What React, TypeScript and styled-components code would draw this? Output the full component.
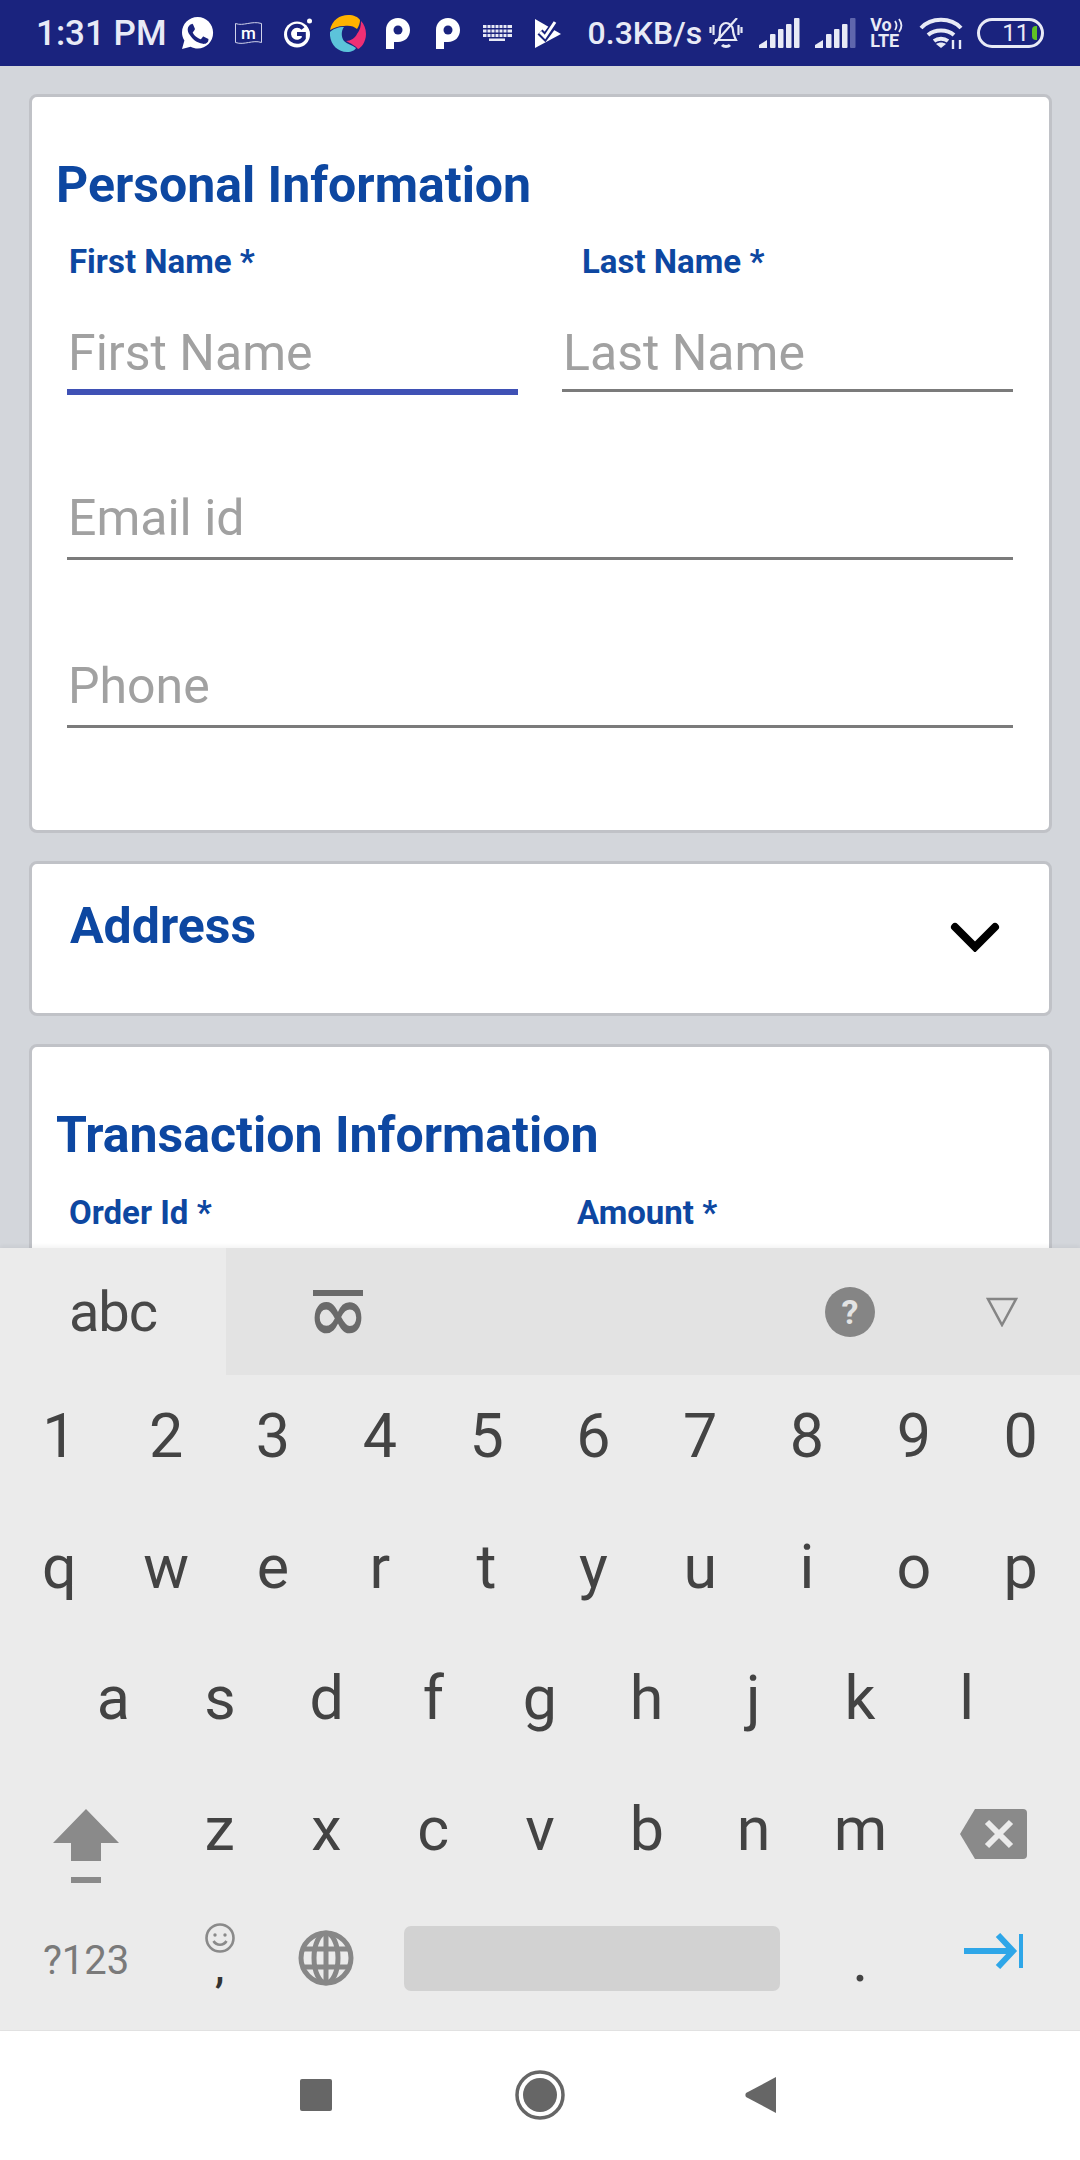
import React from "react";
import styled, { createGlobalStyle } from "styled-components";

const Global = createGlobalStyle`
  html, body { margin: 0; padding: 0; background: #fff; }
  * { box-sizing: border-box; }
`;

const Screen = styled.div`
  width: 1080px; height: 2160px; display: flex; flex-direction: column; overflow: hidden;
  font-family: Roboto, "Liberation Sans", sans-serif;
`;

const StatusBar = styled.header`
  height: 66px; flex: none; background: #1a237e; color: #e8eaf6; display: flex; align-items: center; padding-left: 36px;
`;
const Clock = styled.span`
  font-size: 35px; font-weight: 500; white-space: nowrap; line-height: 1; flex: none;
`;
const Speed = styled.span<{ $gap: number }>`
  font-size: 32px; font-weight: 500; margin-left: ${(p) => p.$gap}px; white-space: nowrap; line-height: 1; flex: none;
`;
const Slot = styled.span<{ $gap: number }>`
  display: flex; align-items: center; flex: none; margin-left: ${(p) => p.$gap}px;
  svg { display: block; }
`;
const VolteStack = styled.span`
  width: 34px; margin-left: 14px; flex: none; display: flex; flex-direction: column; gap: 0;
  font-size: 18px; font-weight: 700; line-height: 16px;
`;
const VolteLine = styled.span`
  display: flex; align-items: center; gap: 2px; height: 16px;
  svg { display: block; }
`;
const Battery = styled.span`
  width: 67px; height: 30px; margin-left: 14px; flex: none; border: 3px solid #e8eaf6; border-radius: 15px;
  display: flex; align-items: center; padding: 0 4px 0 22px; font-size: 24px; font-weight: 400; line-height: 1;
`;
const BatteryLevel = styled.i`
  width: 5px; height: 14px; background: #5fc224; border-radius: 4px 0 0 4px; margin-left: auto;
`;

const Content = styled.main`
  flex: 1; min-height: 0; overflow: hidden; background: #d3d6db; padding: 28px 28px 0 29px;
  display: flex; flex-direction: column; gap: 28px;
`;
const Card = styled.section`
  flex: none; background: #fff; border: 3px solid #c0c2c7; border-radius: 8px; color: #0d47a1;
`;
const PersonalCard = styled(Card)`
  height: 739px; padding: 60px 36px 0 0;
`;
const TransactionCard = styled(Card)`
  height: 300px; padding: 60px 36px 0 0;
`;
const Heading = styled.h2<{ $below?: number }>`
  margin: 0 0 ${(p) => p.$below ?? 29}px 24px; font-size: 50px; line-height: 56px; font-weight: 700; white-space: nowrap;
`;
const LabelRow = styled.div<{ $first: number }>`
  display: grid; grid-template-columns: ${(p) => p.$first}px 1fr; padding-left: 37px;
`;
const Label = styled.label`
  font-size: 33px; line-height: 40px; font-weight: 700; white-space: nowrap;
`;
const FieldRow = styled.div`
  display: grid; grid-template-columns: 1fr 1fr; column-gap: 44px; padding-left: 35px; align-items: start;
`;
const Field = styled.div<{ $focus?: boolean; $top: number; $pad?: number }>`
  margin-top: ${(p) => p.$top}px; padding: 0 0 ${(p) => p.$pad ?? 8}px 1px; min-width: 0;
  border-bottom: ${(p) => (p.$focus ? "6px solid #3f51b5" : "3px solid #7b7b7b")};
  color: #a1a1a1; font-size: 50px; line-height: 56px; white-space: nowrap;
`;
const StackField = styled(Field)`
  margin-left: 35px;
`;
const AddressCard = styled(Card)`
  height: 155px; display: flex; align-items: flex-start; justify-content: space-between; padding: 34px 49px 0 38px;
`;
const AddressTitle = styled.h2`
  margin: 0; font-size: 50px; line-height: 56px; font-weight: 700;
`;
const Chevron = styled.svg`
  width: 50px; height: 30px; margin-top: 24px;
`;

const Keyboard = styled.section`
  height: 782px; flex: none; background: #ebebeb; color: #434343; position: relative;
  box-shadow: 0 -2px 4px rgba(0,0,0,.05);
`;
const TabBar = styled.div`
  height: 127px; background: #e3e3e3; display: flex; align-items: center;
`;
const ActiveTab = styled.div`
  width: 226px; height: 100%; background: #ebebeb; display: flex; align-items: center; justify-content: center;
  font-size: 56px; font-weight: 400; letter-spacing: -1px; color: #484848; line-height: 1;
`;
const ScriptTab = styled.div`
  margin-left: 87px; width: 50px; height: 43px; border-top: 6px solid #6a6a6a; color: #6a6a6a;
  font-family: "DejaVu Sans", sans-serif; font-size: 60px; line-height: 37px; font-weight: 700;
  display: flex; justify-content: center;
`;
const ScriptGlyph = styled.span`
  display: block; transform: scale(1.2, 1.25);
`;
const TabIcons = styled.div`
  margin-left: auto; display: flex; align-items: center; padding-right: 62px; gap: 111px;
  svg { display: block; }
`;
const KeyRow = styled.div<{ $cols?: string; $pad?: number }>`
  height: 131px; display: grid; align-items: center; justify-items: center;
  grid-template-columns: ${(p) => p.$cols ?? "repeat(10, 1fr)"};
  padding: 0 ${(p) => p.$pad ?? 6}px;
`;
const Key = styled.span`
  font-size: 61px; font-weight: 400; line-height: 1; color: #434343; margin-top: -8px;
`;
const SymbolKey = styled.span`
  font-size: 40px; line-height: 1; color: #7a7a7a; margin-top: -8px;
`;
const IconKey = styled.span<{ $y?: number }>`
  display: flex; align-items: center; justify-content: center;
  transform: translateY(${(p) => p.$y ?? 0}px);
  svg { display: block; }
`;
const CommaKey = styled.span`
  display: flex; flex-direction: column; align-items: center; color: #333; font-size: 42px; font-weight: 500; line-height: 29px; margin-top: -25px;
  svg { display: block; }
`;
const SpaceBar = styled.span`
  justify-self: stretch; height: 65px; margin: -13px 27px 0 24px; background: #d2d2d2; border-radius: 7px;
`;
const NavBar = styled.nav`
  height: 130px; flex: none; background: #fff; display: flex; align-items: center; justify-content: center;
  border-top: 1px solid #e2e2e2; padding-bottom: 2px;
`;
const NavButton = styled.span<{ $right?: number }>`
  width: 224px; display: flex; justify-content: center; padding-right: ${(p) => p.$right ?? 0}px;
  svg { display: block; }
`;

const WhatsApp = () => (
  <svg width="33" height="34" viewBox="0 0 33 34">
    <path fill="#fff" d="M16.7 1C7.9 1 1 8 1 16.4c0 3 .9 5.8 2.4 8.2L1 33l8.6-2.3c2.2 1.2 4.6 1.8 7.1 1.8 8.6 0 15.4-7 15.4-15.8C32.1 8 25.3 1 16.7 1z"/>
    <path fill="#1a237e" d="M10.6 8.2c-.6 0-1.4.2-2 1-.7.8-1.9 2-1.9 4.5s1.8 4.9 2.1 5.2c.3.4 3.6 5.6 8.8 7.6 4.3 1.7 5.2 1.4 6.1 1.3.9-.1 3-1.2 3.4-2.4.4-1.2.4-2.2.3-2.4-.1-.2-.5-.3-1-.6l-3.5-1.7c-.5-.2-.8-.3-1.2.2l-1.6 2c-.3.4-.6.4-1.1.2-.5-.3-2.2-.8-4.2-2.6-1.6-1.4-2.6-3.1-2.9-3.6-.3-.5 0-.8.2-1l1.1-1.3c.3-.4.4-.6.6-1 .2-.4.1-.7 0-1l-1.6-3.8c-.4-1-.9-.9-1.2-1z"/>
  </svg>
);
const Flag = () => (
  <svg width="27" height="24" viewBox="0 0 27 24">
    <path fill="none" stroke="#cfd2ea" strokeWidth="1" d="M.5 2.5c8 3 16-3 26 0v19c-9-3-17 3-26 0z"/>
    <text x="13.5" y="17.5" textAnchor="middle" fill="#fff" fontSize="17" fontWeight="500" fontFamily="Roboto, sans-serif">m</text>
  </svg>
);
const GIcon = () => (
  <svg width="29" height="30" viewBox="0 0 29 30">
    <circle cx="13" cy="16.5" r="13" fill="#fff"/>
    <path fill="none" stroke="#1a237e" strokeWidth="4" d="M19 10.5a8 8 0 1 0 .8 9.6V16H13"/>
    <circle cx="25.5" cy="3" r="2.5" fill="#fff"/>
  </svg>
);
const Pie = () => (
  <svg width="36" height="37" viewBox="0 0 36 37">
    <path fill="#ffb300" d="M0 15C2 5 10 0 18 0c6 0 10 2 12 5 0 3-1 6-3 9-3-3-8-4-13-3-6 0-10 2-14 4z"/>
    <path fill="#5cc3da" d="M0 17c3-3 8-5 14-5-3 4-3 10 0 14 3 3 8 4 12 7-1 2-4 4-9 4C7 37-1 28 0 17z"/>
    <path fill="#ef2f74" d="M31 6c3 3 5 8 5 13 0 8-5 14-8 15-2-3-8-6-12-8 5 0 9-3 11-7 3-4 4-8 4-13z"/>
  </svg>
);
const PIcon = () => (
  <svg width="24" height="31" viewBox="0 0 24 31">
    <path fill="#fff" d="M0 31V12C0 5 5 0 12 0s12 5 12 12-5 12-12 12H8v7z"/>
    <circle cx="12" cy="12" r="4.5" fill="#1a237e"/>
  </svg>
);
const KeyboardIcon = () => (
  <svg width="29" height="16" viewBox="0 0 29 16" fill="#e8eaf6">
    <rect x="0" y="0" width="29" height="3"/><rect x="0" y="4.5" width="29" height="3"/><rect x="0" y="9" width="29" height="3"/><rect x="6" y="13.5" width="16" height="2.5"/>
    <path stroke="#1a237e" strokeWidth="1" d="M4 0v12M8 0v12M12 0v12M16 0v12M20 0v12M24 0v12"/>
  </svg>
);
const TagCheck = () => (
  <svg width="26" height="30" viewBox="0 0 26 30">
    <path fill="#fff" d="M0 1l26 15L0 30z"/>
    <path fill="none" stroke="#1a237e" strokeWidth="7" d="M5 14l5 5L21 4"/>
    <path fill="none" stroke="#fff" strokeWidth="3" d="M5 14l5 5L20 4"/>
  </svg>
);
const BellOff = () => (
  <svg width="34" height="30" viewBox="0 0 34 30" fill="none" stroke="#e8eaf6" strokeWidth="2.2">
    <path d="M10 21c1-3 1-6 1-9 0-4 3-7 6-7s7 3 7 7c0 3 1 6 3 10H6"/>
    <path d="M13 27c2 2 6 2 8 0" strokeWidth="3"/>
    <path d="M5 26L28 0"/>
    <path d="M1.5 9v6M4.5 7v10M29.5 7v10M32.5 9v6"/>
  </svg>
);
const Signal = ({ dim }: { dim?: boolean }) => (
  <svg width="41" height="30" viewBox="0 0 41 30" fill="#e8eaf6">
    <path d="M0 30v-3l8-5v8z"/><rect x="11" y="16" width="5.5" height="14" rx="1"/><rect x="19" y="11" width="5.5" height="19" rx="1"/>
    <rect x="27" y="6" width="5.5" height="24" rx="1"/>
    <rect x="35" y="0" width="5.5" height="30" rx="1" fill={dim ? "#5f66ad" : "#e8eaf6"}/>
  </svg>
);
const Wifi = () => (
  <svg width="44" height="32" viewBox="0 0 44 32" fill="none" stroke="#e8eaf6" strokeWidth="4">
    <path d="M2 11c10-11 30-11 40 0M9 18c7-6 19-6 26 0M15 24c4-3 10-3 14 0"/>
    <path fill="#e8eaf6" stroke="none" d="M22 31l-5-4c3-2 7-2 10 0z"/>
    <path strokeWidth="2.4" d="M34 23v9M41 23v9"/>
  </svg>
);

export default function App() {
  const nums = "1234567890".split("");
  const top = "qwertyuiop".split("");
  const mid = "asdfghjkl".split("");
  const low = "zxcvbnm".split("");
  return (
    <Screen>
      <Global />
      <StatusBar>
        <Clock>1:31 PM</Clock>
        <Slot $gap={14}><WhatsApp /></Slot>
        <Slot $gap={21}><Flag /></Slot>
        <Slot $gap={22}><GIcon /></Slot>
        <Slot $gap={17}><Pie /></Slot>
        <Slot $gap={20}><PIcon /></Slot>
        <Slot $gap={26}><PIcon /></Slot>
        <Slot $gap={23}><KeyboardIcon /></Slot>
        <Slot $gap={23}><TagCheck /></Slot>
        <Speed $gap={27}>0.3KB/s</Speed>
        <Slot $gap={7}><BellOff /></Slot>
        <Slot $gap={16}><Signal /></Slot>
        <Slot $gap={15}><Signal dim /></Slot>
        <VolteStack>
          <VolteLine>
            Vo
            <svg width="9" height="15" viewBox="0 0 9 15" fill="none" stroke="#e8eaf6" strokeWidth="1.8">
              <path d="M1 3c2 3 2 6 0 9M5 1c3 4 3 9 0 13" />
            </svg>
          </VolteLine>
          <VolteLine>LTE</VolteLine>
        </VolteStack>
        <Slot $gap={15}><Wifi /></Slot>
        <Battery>11<BatteryLevel /></Battery>
      </StatusBar>

      <Content>
        <PersonalCard>
          <Heading>Personal Information</Heading>
          <LabelRow $first={513}>
            <Label>First Name *</Label>
            <Label>Last Name *</Label>
          </LabelRow>
          <FieldRow>
            <Field $focus $top={43}>First Name</Field>
            <Field $top={43}>Last Name</Field>
          </FieldRow>
          <StackField $top={95} $pad={11}>Email id</StackField>
          <StackField $top={98} $pad={11}>Phone</StackField>
        </PersonalCard>

        <AddressCard>
          <AddressTitle>Address</AddressTitle>
          <Chevron viewBox="0 0 50 30" fill="none" stroke="#000" strokeWidth="8" strokeLinecap="round">
            <path d="M5 5l20 20L45 5" />
          </Chevron>
        </AddressCard>

        <TransactionCard>
          <Heading $below={30}>Transaction Information</Heading>
          <LabelRow $first={508}>
            <Label>Order Id *</Label>
            <Label>Amount *</Label>
          </LabelRow>
        </TransactionCard>
      </Content>

      <Keyboard>
        <TabBar>
          <ActiveTab>abc</ActiveTab>
          <ScriptTab><ScriptGlyph>∞</ScriptGlyph></ScriptTab>
          <TabIcons>
            <svg width="50" height="50" viewBox="0 0 50 50">
              <circle cx="25" cy="25" r="25" fill="#858585" />
              <text x="25" y="37" textAnchor="middle" fontSize="34" fontWeight="700" fontFamily="Roboto, sans-serif" fill="#e3e3e3">?</text>
            </svg>
            <svg width="32" height="30" viewBox="0 0 32 30" fill="none" stroke="#858585" strokeWidth="2.5">
              <path d="M2 2h28L16 28z" />
            </svg>
          </TabIcons>
        </TabBar>
        <KeyRow>{nums.map((k) => <Key key={k}>{k}</Key>)}</KeyRow>
        <KeyRow>{top.map((k) => <Key key={k}>{k}</Key>)}</KeyRow>
        <KeyRow $pad={60} $cols="repeat(9, 1fr)">{mid.map((k) => <Key key={k}>{k}</Key>)}</KeyRow>
        <KeyRow $cols="1.5fr repeat(7, 1fr) 1.5fr">
          <IconKey $y={13}>
            <svg width="66" height="76" viewBox="0 0 66 76" fill="#8a8a8a">
              <path d="M33 0l33 34H48v18H18V34H0z" />
              <rect x="18" y="68" width="30" height="6" />
            </svg>
          </IconKey>
          {low.map((k) => <Key key={k}>{k}</Key>)}
          <IconKey>
            <svg width="67" height="50" viewBox="0 0 67 50">
              <path fill="#8a8a8a" d="M15 0h48a4 4 0 0 1 4 4v42a4 4 0 0 1-4 4H15L0 25z" />
              <path stroke="#ebebeb" strokeWidth="6" d="M27 13l24 24M51 13L27 37" />
            </svg>
          </IconKey>
        </KeyRow>
        <KeyRow $cols="1.5fr 1fr 1fr 4fr 1fr 1.5fr">
          <SymbolKey>?123</SymbolKey>
          <CommaKey>
            <svg width="30" height="30" viewBox="0 0 30 30" fill="none" stroke="#8a8a8a" strokeWidth="2.6">
              <circle cx="15" cy="15" r="13.5" />
              <circle cx="10" cy="12" r="1.7" fill="#8a8a8a" stroke="none" />
              <circle cx="20" cy="12" r="1.7" fill="#8a8a8a" stroke="none" />
              <path d="M8.5 18c3 5 10 5 13 0" />
            </svg>
            ,
          </CommaKey>
          <IconKey $y={-7}>
            <svg width="56" height="56" viewBox="0 0 56 56" fill="none" stroke="#878787" strokeWidth="5">
              <circle cx="28" cy="28" r="25" />
              <ellipse cx="28" cy="28" rx="12" ry="25" />
              <path d="M28 3v50M5 19h46M5 37h46" />
            </svg>
          </IconKey>
          <SpaceBar />
          <Key>.</Key>
          <IconKey $y={-14}>
            <svg width="60" height="36" viewBox="0 0 60 36" fill="none" stroke="#2ea6e8" strokeWidth="6">
              <path d="M0 18h48M34 2l15 16-15 16" />
              <path d="M57 1v34" strokeWidth="4" />
            </svg>
          </IconKey>
        </KeyRow>
      </Keyboard>

      <NavBar>
        <NavButton>
          <svg width="32" height="32" viewBox="0 0 32 32"><rect width="32" height="32" rx="2" fill="#666" /></svg>
        </NavButton>
        <NavButton>
          <svg width="50" height="50" viewBox="0 0 50 50"><circle cx="25" cy="25" r="23" fill="none" stroke="#666" strokeWidth="3.5" /><circle cx="25" cy="25" r="17" fill="#666" /></svg>
        </NavButton>
        <NavButton $right={8}>
          <svg width="32" height="36" viewBox="0 0 32 36"><path d="M32 0v36L2 20a2 3 0 0 1 0-4z" fill="#666" /></svg>
        </NavButton>
      </NavBar>
    </Screen>
  );
}
